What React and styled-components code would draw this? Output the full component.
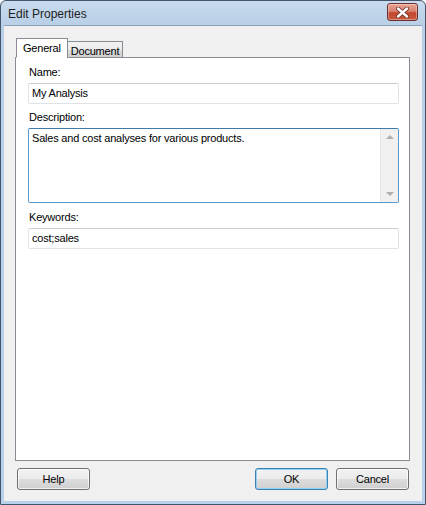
import React from 'react';
import styled, { createGlobalStyle } from 'styled-components';

const GlobalStyle = createGlobalStyle`
  html, body {
    margin: 0;
    padding: 0;
    background: #ffffff;
  }
  body {
    font-family: 'Liberation Sans', Arial, sans-serif;
    font-size: 11px;
    letter-spacing: -0.2px;
    color: #000;
  }
`;

const Window = styled.div`
  box-sizing: border-box;
  width: 426px;
  height: 505px;
  display: flex;
  flex-direction: column;
  border: 1px solid #44546a;
  border-radius: 6px 6px 0 0;
  background: linear-gradient(to bottom, #c9dbee 0px, #b8cfe7 24px, #b9d1ea 100%);
  padding: 0 3px 3px 3px;
  overflow: hidden;
`;

const TitleBar = styled.div`
  height: 24px;
  display: flex;
  align-items: center;
  justify-content: space-between;
  padding-left: 4px;
  padding-right: 4px;
`;

const Title = styled.span`
  font-family: 'Liberation Sans', Arial, sans-serif;
  font-size: 12px;
  letter-spacing: 0;
  color: #1e1e1e;
  margin-top: 2px;
`;

const CloseButton = styled.div`
  box-sizing: border-box;
  width: 31px;
  height: 18px;
  margin-top: -2px;
  display: flex;
  align-items: center;
  justify-content: center;
  border: 1px solid #6b2e2e;
  border-radius: 3px;
  background: linear-gradient(to bottom, #e8a493 0%, #d98270 45%, #c2472f 55%, #c75a3e 100%);
  box-shadow: inset 0 0 0 1px rgba(255, 255, 255, 0.35);
`;

const Client = styled.div`
  flex: 1;
  display: flex;
  flex-direction: column;
  background: #f0f0f0;
  border-top: 1px solid #8aa0bb;
  padding: 12px 12px 0 11px;
`;

const Tabs = styled.div`
  display: flex;
  align-items: flex-end;
  height: 20px;
  padding-left: 1px;
  position: relative;
  z-index: 1;
  margin-bottom: -1px;
`;

const Tab = styled.div`
  box-sizing: border-box;
  height: ${(p) => (p.active ? '20px' : '17px')};
  padding: 0 ${(p) => (p.active ? '6px' : '3px')};
  padding-top: ${(p) => (p.active ? '0' : '2px')};
  display: flex;
  align-items: center;
  border: 1px solid #898c95;
  border-bottom: ${(p) => (p.active ? '1px solid #ffffff' : '1px solid #898c95')};
  margin-left: ${(p) => (p.active ? '0' : '-1px')};
  background: ${(p) =>
    p.active ? '#ffffff' : 'linear-gradient(to bottom, #f2f2f2 0%, #ebebeb 50%, #dddddd 51%, #cfcfcf 100%)'};
  font-size: 11px;
`;

const Panel = styled.div`
  box-sizing: border-box;
  height: 404px;
  background: #ffffff;
  border: 1px solid #898c95;
  padding: 8px 10px 0 12px;
  display: flex;
  flex-direction: column;
`;

const Label = styled.div`
  height: 13px;
  margin-bottom: 4px;
  margin-left: 1px;
`;

const TextBox = styled.div`
  box-sizing: border-box;
  height: 21px;
  border: 1px solid #dfe3e8;
  border-top-color: #c9ced6;
  border-radius: 2px;
  padding: 3px 3px;
  margin-bottom: 7px;
  white-space: nowrap;
`;

const TextArea = styled.div`
  box-sizing: border-box;
  height: 75px;
  border: 1px solid #5a9ad0;
  border-top-color: #3d7bad;
  border-radius: 2px;
  display: flex;
  margin-bottom: 8px;
`;

const AreaText = styled.div`
  flex: 1;
  padding: 3px 3px;
`;

const ScrollBar = styled.div`
  width: 17px;
  background: #f0f0f0;
  border-left: 1px solid #e6e6e6;
  display: flex;
  flex-direction: column;
  justify-content: space-between;
  align-items: center;
  padding: 6px 0 6px 0;
`;

const Arrow = styled.div`
  width: 0;
  height: 0;
  border-left: 4px solid transparent;
  border-right: 4px solid transparent;
  ${(p) => (p.up ? 'border-bottom: 4px solid #b0b0b0;' : 'border-top: 4px solid #b0b0b0;')}
`;

const Footer = styled.div`
  display: flex;
  align-items: center;
  justify-content: space-between;
  padding: 7px 1px 0 2px;
`;

const ButtonGroup = styled.div`
  display: flex;
  gap: 8px;
`;

const Button = styled.div`
  box-sizing: border-box;
  width: 73px;
  height: 22px;
  display: flex;
  align-items: center;
  justify-content: center;
  border: 1px solid ${(p) => (p.primary ? '#3c7fb1' : '#707070')};
  border-radius: 3px;
  background: linear-gradient(to bottom, #f2f2f2 0%, #ebebeb 50%, #dddddd 51%, #cfcfcf 100%);
  box-shadow: inset 0 0 0 1px ${(p) => (p.primary ? '#8ed3f5' : 'rgba(255,255,255,0.7)')};
`;

const CloseIcon = () => (
  <svg width="13" height="11" viewBox="0 0 13 11">
    <path
      d="M2 1.5 L11 9.5 M11 1.5 L2 9.5"
      stroke="#6a2a22"
      strokeWidth="4"
      strokeLinecap="round"
    />
    <path
      d="M2 1.5 L11 9.5 M11 1.5 L2 9.5"
      stroke="#ffffff"
      strokeWidth="2.4"
      strokeLinecap="round"
    />
  </svg>
);

const App = () => {
  return (
    <>
      <GlobalStyle />
      <Window>
        <TitleBar>
          <Title>Edit Properties</Title>
          <CloseButton>
            <CloseIcon />
          </CloseButton>
        </TitleBar>
        <Client>
          <Tabs>
            <Tab active>General</Tab>
            <Tab>Document</Tab>
          </Tabs>
          <Panel>
            <Label>Name:</Label>
            <TextBox>My Analysis</TextBox>
            <Label>Description:</Label>
            <TextArea>
              <AreaText>Sales and cost analyses for various products.</AreaText>
              <ScrollBar>
                <Arrow up />
                <Arrow />
              </ScrollBar>
            </TextArea>
            <Label>Keywords:</Label>
            <TextBox>cost;sales</TextBox>
          </Panel>
          <Footer>
            <Button>Help</Button>
            <ButtonGroup>
              <Button primary>OK</Button>
              <Button>Cancel</Button>
            </ButtonGroup>
          </Footer>
        </Client>
      </Window>
    </>
  );
};

export default App;
